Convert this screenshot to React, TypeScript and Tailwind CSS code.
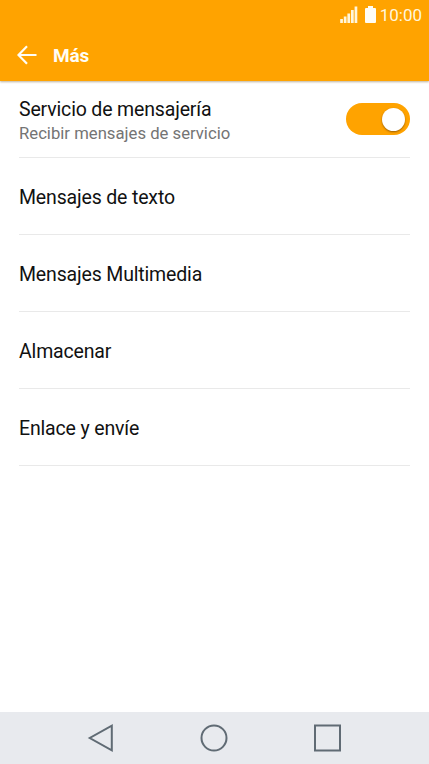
const items = ["Mensajes de texto", "Mensajes Multimedia", "Almacenar", "Enlace y envíe"];

function StatusBar() {
  return (
    <div className="flex h-[30px] items-center justify-end pr-[7px] text-[#fff6dc]">
      <svg className="mr-[7px]" width="18" height="18" viewBox="0 0 18 18" fill="currentColor">
        <rect x="0.2" y="13" width="2.7" height="4" />
        <rect x="3.8" y="10.5" width="2.7" height="6.5" />
        <rect x="7.4" y="7.5" width="2.7" height="9.5" />
        <rect x="11" y="4" width="2.7" height="13" />
        <rect x="14.6" y="0.5" width="2.7" height="16.5" />
      </svg>
      <svg className="mr-1" width="11" height="18" viewBox="0 0 11 18" fill="#fffdf5">
        <path d="M3 0h5v2h2q1 0 1 1v13q0 1-1 1H1q-1 0-1-1V3q0-1 1-1h2z" />
      </svg>
      <span className="text-[17px] leading-[30px]">10:00</span>
    </div>
  );
}

function Header() {
  return (
    <header className="flex h-[51px] items-center pl-[17px] text-[#fffdf5]">
      <svg className="mb-[2px]" width="20" height="20" viewBox="0 0 20 20" fill="none" stroke="currentColor" strokeWidth="2.2">
        <path d="M19.5 10H2M10 1.2 1.5 10l8.500 8.800" />
      </svg>
      <h1 className="ml-4 pt-px text-[19px] font-bold tracking-[-0.2px]">Más</h1>
    </header>
  );
}

export default function App() {
  return (
    <div className="flex h-[764px] w-[429px] flex-col overflow-hidden bg-white font-['Roboto',sans-serif]">
      <div className="z-10 bg-[#ffa300] shadow-[0_1px_2px_rgba(90,60,0,0.4)]">
        <StatusBar />
        <Header />
      </div>

      <main className="flex-1 px-[19px] text-[19.5px] tracking-[-0.16px] text-[#111111]">
        <div className="flex h-[77px] items-center justify-between border-b border-[#e9e9e9]">
          <div className="pt-[3px]">
            <p className="leading-[25px]">Servicio de mensajería</p>
            <p className="text-[16.7px] leading-[23px] tracking-normal text-[#747474]">Recibir mensajes de servicio</p>
          </div>
          <button
            role="switch"
            aria-checked="true"
            className="flex h-8 w-16 items-center justify-end rounded-full bg-[#ffa300] pr-[5px]"
          >
            <span className="size-[23px] rounded-full bg-white shadow-[0_1px_2px_rgba(90,50,0,0.6)]" />
          </button>
        </div>
        {items.map((item) => (
          <div key={item} className="flex h-[77px] items-center border-b border-[#e9e9e9] pt-[3px]">
            {item}
          </div>
        ))}
      </main>

      <nav className="flex h-[52px] items-center bg-[#e8eaee] pl-[87px]">
        <svg width="28" height="28" viewBox="0 0 28 28" fill="none" stroke="#606b74" strokeWidth="2">
          <path d="M24.800 1.700v24.600L2.800 14z" />
        </svg>
        <svg className="ml-[85px]" width="28" height="28" viewBox="0 0 28 28" fill="none" stroke="#606b74" strokeWidth="2">
          <circle cx="14" cy="14" r="12.500" />
        </svg>
        <svg className="ml-[85px]" width="28" height="28" viewBox="0 0 28 28" fill="none" stroke="#606b74" strokeWidth="2">
          <rect x="2" y="1.500" width="25" height="25" />
        </svg>
      </nav>
    </div>
  );
}
